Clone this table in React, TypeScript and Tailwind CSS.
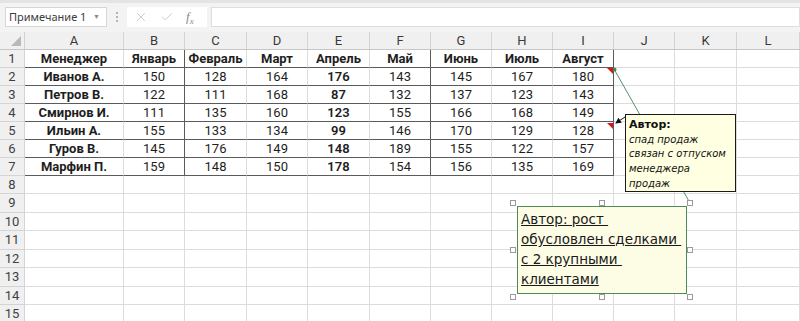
import React from "react";
import { X, Check } from "lucide-react";

const colNames = ["A", "B", "C", "D", "E", "F", "G", "H", "I", "J", "K", "L"];
const colWidths = [
  "w-[99px]",
  "w-[61px]",
  "w-[62px]",
  "w-[61px]",
  "w-[62px]",
  "w-[61px]",
  "w-[61px]",
  "w-[61px]",
  "w-[61px]",
  "w-[61px]",
  "w-[62px]",
  "w-[63px]",
];
const rowHeights = [
  "h-[18px]",
  "h-[18px]",
  "h-[18px]",
  "h-[18px]",
  "h-[18px]",
  "h-[18px]",
  "h-[18px]",
  "h-[18px]",
  "h-[19px]",
  "h-[18px]",
  "h-[19px]",
  "h-[18px]",
  "h-[19px]",
  "h-[18px]",
  "h-[19px]",
];

const header = ["Менеджер", "Январь", "Февраль", "Март", "Апрель", "Май", "Июнь", "Июль", "Август"];
const sales: (string | number)[][] = [
  ["Иванов А.", 150, 128, 164, 176, 143, 145, 167, 180],
  ["Петров В.", 122, 111, 168, 87, 132, 137, 123, 143],
  ["Смирнов И.", 111, 135, 160, 123, 155, 166, 168, 149],
  ["Ильин А.", 155, 133, 134, 99, 146, 170, 129, 128],
  ["Гуров В.", 145, 176, 149, 148, 189, 155, 122, 157],
  ["Марфин П.", 159, 148, 150, 178, 154, 156, 135, 169],
];
const rows = [header, ...sales];

// columns with a dark right edge inside the table
const darkRight = [1, 5, 8];

function Cell({ r, c }: { r: number; c: number }) {
  const inTable = r < 7 && c < 9;
  const value = inTable ? rows[r][c] : "";
  const bold = inTable && (r === 0 || c === 0);
  const semi = inTable && r > 0 && c === 4;
  return (
    <div
      className={`${colWidths[c]} shrink-0 flex items-center justify-center border-r border-b border-[#dcdcdc] text-[13px] text-[#1e1e1e] ${
        inTable ? "border-b-[#5a5a5a]" : ""
      } ${inTable && darkRight.includes(c) ? "border-r-[#5a5a5a]" : ""} ${
        bold ? "font-bold" : ""
      } ${semi ? "font-semibold" : ""}`}
    >
      {value}
    </div>
  );
}

function Handle({ x, y }: { x: number; y: number }) {
  return (
    <div
      className="absolute w-[6px] h-[6px] border border-[#9a9a9a] bg-white"
      style={{ left: x - 3, top: y - 3 }}
    />
  );
}

export default function App() {
  return (
    <div className="relative w-[800px] h-[321px] overflow-hidden bg-white font-['Roboto',sans-serif]">
      {/* formula bar */}
      <div className="h-[32px] bg-[#f3f3f3] border-t-[3px] border-[#e4e4e4] flex items-start pt-[4px] pl-[5px] gap-[4px]">
        <div className="w-[102px] h-[20px] bg-white border border-[#d6d6d6] flex items-center justify-between pl-[3px] pr-[6px] text-[11px] text-[#3c3c3c] font-['Noto_Sans',sans-serif]">
          <span>Примечание 1</span>
          <span className="text-[7px] text-[#8a8a8a]">▼</span>
        </div>
        <div className="w-[12px] h-[20px] flex flex-col items-center justify-center gap-[2px]">
          <span className="w-[2px] h-[2px] bg-[#b5b5b5]" />
          <span className="w-[2px] h-[2px] bg-[#b5b5b5]" />
          <span className="w-[2px] h-[2px] bg-[#b5b5b5]" />
        </div>
        <div className="w-[80px] h-[20px] bg-white flex items-center pl-[7px] gap-[12px] text-[#b4b4b4]">
          <X size={14} strokeWidth={1.2} />
          <Check size={14} strokeWidth={1.2} />
          <span className="font-['Liberation_Serif',serif] italic text-[13px] text-[#8c8c8c]">
            f<sub className="text-[9px]">x</sub>
          </span>
        </div>
        <div className="flex-1 h-[20px] bg-white border border-[#dedede]" />
      </div>

      {/* column headers */}
      <div className="flex h-[18px] bg-[#f0f0f0] border-b border-[#c6c6c6]">
        <div className="w-[25px] shrink-0 border-r border-[#d0d0d0] relative">
          <svg className="absolute right-[3px] bottom-[3px]" width="10" height="10" viewBox="0 0 10 10">
            <polygon points="10,0 10,10 0,10" fill="#b9b9b9" />
          </svg>
        </div>
        {colNames.map((n, c) => (
          <div
            key={n}
            className={`${colWidths[c]} shrink-0 border-r border-[#d4d4d4] flex items-center justify-center text-[13px] text-[#3a3a3a]`}
          >
            {n}
          </div>
        ))}
      </div>

      {/* sheet rows */}
      {rowHeights.map((h, r) => (
        <div key={r} className={`flex ${h}`}>
          <div className="w-[25px] shrink-0 bg-[#f0f0f0] border-r border-b border-[#d4d4d4] flex items-center justify-center text-[13px] text-[#3f3f3f]">
            {r + 1}
          </div>
          {colNames.map((_, c) => (
            <Cell key={c} r={r} c={c} />
          ))}
        </div>
      ))}

      {/* comment connectors and indicators */}
      <svg className="absolute left-0 top-0" width="800" height="321">
        <defs>
          <marker id="arrowHead" markerWidth="6" markerHeight="6" refX="5" refY="3" orient="auto">
            <polygon points="0,0 6,3 0,6" fill="#111" />
          </marker>
        </defs>
        <line x1="614" y1="69" x2="690" y2="203" stroke="#5b8f6b" strokeWidth="1" />
        <circle cx="614.5" cy="69.5" r="2" fill="#3d8a4f" />
        <line x1="625" y1="117" x2="616" y2="123" stroke="#111" strokeWidth="1" markerEnd="url(#arrowHead)" />
        <polygon points="607,68 613,68 613,74" fill="#d21a1a" />
        <polygon points="607,123 613,123 613,129" fill="#d21a1a" />
      </svg>

      {/* note on I5 */}
      <div className="absolute left-[625px] top-[114px] w-[111px] h-[78px] bg-[#ffffe1] border border-[#1a1a1a] pl-[3px] pt-[3px] font-['DejaVu_Sans',sans-serif] text-[10px] leading-[14.7px] text-[#111]">
        <div className="font-bold text-[11px]">Автор:</div>
        <div className="italic">спад продаж</div>
        <div className="italic">связан с отпуском</div>
        <div className="italic">менеджера</div>
        <div className="italic">продаж</div>
      </div>

      {/* note on I2, open for editing */}
      <div className="absolute left-[517px] top-[206px] w-[170px] h-[88px] bg-[#fdfde6] border border-[#4f8a5b] pl-[3px] pt-[2px] font-['DejaVu_Sans',sans-serif] text-[13.5px] leading-[20px] text-[#1a1a1a]">
        <div className="underline whitespace-pre">Автор: рост </div>
        <div className="underline whitespace-pre">обусловлен сделками </div>
        <div className="underline whitespace-pre">с 2 крупными </div>
        <div className="underline whitespace-pre">клиентами</div>
      </div>
      <Handle x={513} y={203} />
      <Handle x={602} y={203} />
      <Handle x={690} y={203} />
      <Handle x={513} y={250} />
      <Handle x={690} y={250} />
      <Handle x={513} y={297} />
      <Handle x={602} y={297} />
      <Handle x={690} y={297} />
    </div>
  );
}
